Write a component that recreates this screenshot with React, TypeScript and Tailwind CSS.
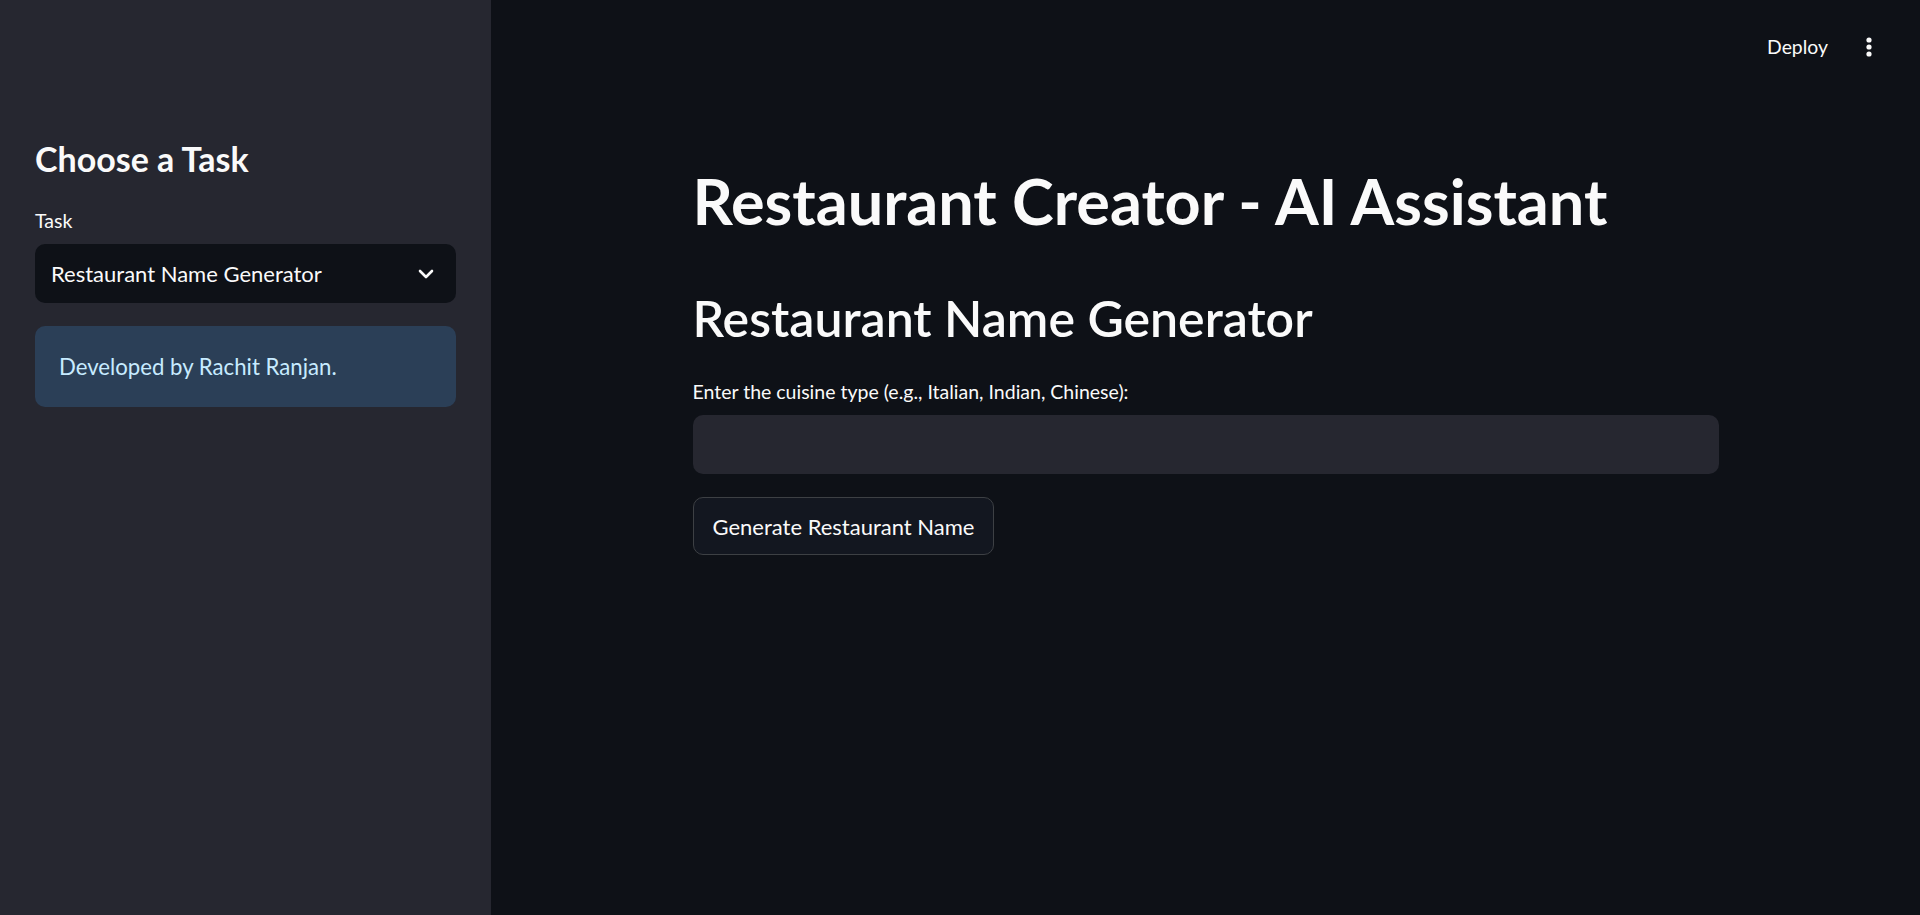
import { useState } from 'react';

function ChevronIcon() {
  return (
    <svg width="16" height="10" viewBox="0 0 16 10" fill="none">
      <path d="M2 2l6 6 6-6" stroke="#fafafa" strokeWidth="2.6" strokeLinecap="round" strokeLinejoin="round" />
    </svg>
  );
}

function MoreIcon() {
  return (
    <svg width="6" height="20" viewBox="0 0 6 20" fill="#fafafa">
      <circle cx="3" cy="3" r="2.6" />
      <circle cx="3" cy="10" r="2.6" />
      <circle cx="3" cy="17" r="2.6" />
    </svg>
  );
}

export default function App() {
  const [cuisine, setCuisine] = useState('');

  return (
    <div className="flex h-[915px] w-full overflow-hidden bg-[#0e1117] font-['Lato','Noto_Sans',sans-serif] text-[#fafafa]">
      {/* sidebar */}
      <aside className="flex w-[491px] shrink-0 flex-col bg-[#262730] px-[35px] pt-[138px]">
        <h2 className="text-[34px] font-bold leading-[41px]">Choose a Task</h2>
        <label className="mt-[30px] text-[19.5px] leading-[23px]">Task</label>
        <div className="mt-[12px] flex h-[59px] items-center justify-between rounded-[10px] bg-[#0e1117] pl-[16px] pr-[22px]">
          <span className="text-[22px]">Restaurant Name Generator</span>
          <ChevronIcon />
        </div>
        <div className="mt-[23px] flex h-[81px] items-center rounded-[10px] bg-[#2b3f57] px-[24px]">
          <span className="text-[22.2px] text-[#c7ebff]">Developed by Rachit Ranjan.</span>
        </div>
      </aside>

      {/* main */}
      <main className="flex flex-1 flex-col">
        <header className="flex h-[94px] items-center justify-end pr-[48px]">
          <span className="text-[19.4px]">Deploy</span>
          <button className="ml-[38px] flex items-center">
            <MoreIcon />
          </button>
        </header>

        <div className="flex justify-center">
          <div className="flex w-[1026px] flex-col pt-[69px]">
            <h1 className="text-[63px] font-bold leading-[76px]">Restaurant Creator - AI Assistant</h1>
            <h2 className="mt-[49px] text-[50px] font-semibold leading-[60px]">Restaurant Name Generator</h2>
            <label className="mt-[32px] text-[19.5px] leading-[23px]">
              Enter the cuisine type (e.g., Italian, Indian, Chinese):
            </label>
            <input
              value={cuisine}
              onChange={(e) => setCuisine(e.target.value)}
              className="mt-[12px] h-[59px] w-full rounded-[10px] bg-[#262730] px-[16px] text-[22px] outline-none"
            />
            <div className="mt-[23px]">
              <button className="flex h-[58px] items-center rounded-[10px] border border-[#3d4044] bg-[#131720] px-[19px] text-[22px]">
                Generate Restaurant Name
              </button>
            </div>
          </div>
        </div>
      </main>
    </div>
  );
}
